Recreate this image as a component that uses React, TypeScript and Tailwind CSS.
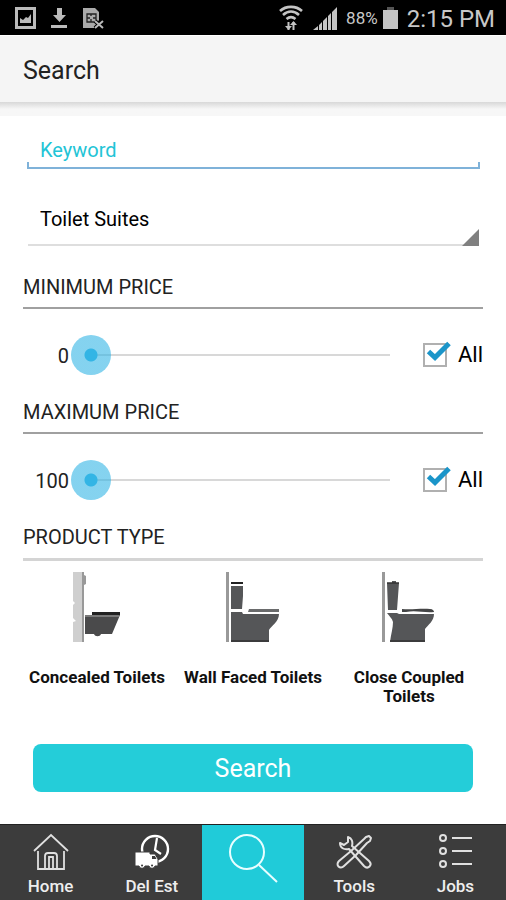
import { useState } from "react"

function StatusBar() {
  return (
    <div className="flex h-9 items-center justify-between border-b border-white bg-black pl-[15px] pr-[11px] text-[#c8c8c8]">
      <div className="flex items-center gap-[15px]">
        <svg width="21" height="22" viewBox="0 0 21 22" fill="none" aria-hidden="true">
          <rect x="1.500" y="1.500" width="18" height="19" stroke="#bbb" strokeWidth="3" />
          <path d="M5 16v-5l3 2 3-3 2 1 3-4v9z" fill="#bbb" />
        </svg>
        <svg width="17" height="22" viewBox="0 0 17 22" fill="#bbb" aria-hidden="true">
          <path d="M6 1h5v7h4l-6.500 7L2 8h4zM0 18h16v3H0z" />
        </svg>
        <svg width="21" height="22" viewBox="0 0 21 22" fill="none" aria-hidden="true">
          <path d="M0 1h12l4 4v8l-5 8H0z" fill="#aaa" />
          <path d="M4 7h9v8H4zM4 11h3M10 11h3M8 7v2M8 15v-3" stroke="#222" strokeWidth="1.300" />
          <path d="M12 14l8 7M20 14l-8 7" stroke="#000" strokeWidth="4" />
          <path d="M12 14l8 7M20 14l-8 7" stroke="#bbb" strokeWidth="2" />
        </svg>
      </div>
      <div className="flex items-center">
        <svg width="24" height="28" viewBox="0 0 24 28" fill="none" stroke="#c4c4c4" aria-hidden="true">
          <path d="M1 7C7 1.500 17 1.500 23 7M4 11C9 6.500 15 6.500 20 11M7.500 15c3-2.500 6-2.500 9 0" strokeWidth="2.600" />
          <path d="M9.500 18v8M14.500 26v-8" strokeWidth="2" />
          <path d="M6 22h7l-3.500 4zM11 21l3.500-4 3.500 4z" fill="#c4c4c4" stroke="none" />
        </svg>
        <svg className="ml-2.5" width="25" height="26" viewBox="0 0 25 26" fill="#c4c4c4" aria-hidden="true">
          <path d="M0 25l5-4v4zM6 20l3-3v8H6zM10 16l4-4v13h-4zM15 11l3-3v17h-3zM19 7l5-5v23h-5z" />
        </svg>
        <span className="ml-2 pt-0.5 text-[17px]">88%</span>
        <svg className="ml-1" width="17" height="24" viewBox="0 0 17 24" aria-hidden="true">
          <path d="M5 1h7v3H5z" fill="#555" />
          <path d="M1 4h15v19H1z" fill="#c4c4c4" />
        </svg>
        <span className="ml-2 pt-0.5 text-2xl">2:15 PM</span>
      </div>
    </div>
  )
}

function PriceFilter({ id, title, initial, min }: any) {
  const [value, setValue] = useState(initial)
  const [all, setAll] = useState(true)

  return (
    <section>
      <h2 className="flex h-[43px] items-center border-b-2 border-[#a0a0a0]">
        <label htmlFor={id}>{title}</label>
      </h2>
      <div className="flex h-[82px] items-center pt-2.5">
        <output htmlFor={id} className="w-[46px] pt-0.5 text-right">
          {value}
        </output>
        <input
          id={id}
          type="range"
          min={min}
          max={5000}
          value={value}
          onChange={(e) => setValue(Number(e.target.value))}
          className="ml-0.5 h-10 min-w-0 flex-1 appearance-none bg-[linear-gradient(#d8d8d8,#d8d8d8)] bg-[length:calc(100%-40px)_2px] bg-center bg-no-repeat [&::-webkit-slider-thumb]:size-10 [&::-webkit-slider-thumb]:appearance-none [&::-webkit-slider-thumb]:rounded-full [&::-webkit-slider-thumb]:bg-[radial-gradient(circle,#33b5e5_6px,#33b5e599_7px)]"
        />
        <label className="ml-[13px] flex items-center gap-[11px] text-[22px] text-black">
          <span className="relative block size-6">
            <input
              type="checkbox"
              checked={all}
              onChange={(e) => setAll(e.target.checked)}
              className="block size-6 appearance-none border-2 border-[#b0b0b0]"
            />
            {all && (
              <svg
                className="pointer-events-none absolute -top-1 left-0"
                width="30"
                height="28"
                viewBox="0 0 30 28"
                fill="none"
                stroke="#1b95c9"
                strokeWidth="5"
                aria-hidden="true"
              >
                <path d="M5.500 12.500l6.500 6L26 4.500" />
              </svg>
            )}
          </span>
          All
        </label>
      </div>
    </section>
  )
}

function ConcealedIcon() {
  return (
    <svg width="48" height="72" viewBox="0 0 48 72" aria-hidden="true">
      <path d="M0 1h10v70H0V51l3-1-3-3V34l2-2-2-2z" fill="#cfcfcf" />
      <path d="M10 1h1v3l2 1v8l-2 1v57H9V1z" fill="#999" />
      <path d="M12 44h35l-8 19H28c-1 3-6 3-7 0h-9z" fill="#4a4a4b" />
      <path d="M19 41h28v3H19z" fill="#222" />
      <path d="M12 45h34" stroke="#aaa" strokeWidth="1" />
    </svg>
  )
}

function WallFacedIcon() {
  return (
    <svg width="54" height="72" viewBox="0 0 54 72" aria-hidden="true">
      <path d="M0 1h3v70H0z" fill="#999" />
      <path d="M5 11h12v2H5z" fill="#222" />
      <path d="M5 15h12v10l-1 13H5zM5 41h11l1 2h36c0 8-8 12-10 16v12H5z" fill="#555658" />
      <path d="M23 38h30v3H22z" fill="#6a6b6c" />
      <path d="M5 70h38" stroke="#333" strokeWidth="1.500" />
    </svg>
  )
}

function CloseCoupledIcon() {
  return (
    <svg width="54" height="72" viewBox="0 0 54 72" aria-hidden="true">
      <path d="M0 1h3v70H0z" fill="#999" />
      <path d="M5 12h5v-2h4v2h3l-2 27H6z" fill="#555658" />
      <path d="M5 42h10l2 1h35c0 7-6 11-9 15v13H8c1-8 3-14 3-20-1-4-4-6-6-9z" fill="#555658" />
      <path d="M20 38c10 1 19-1 28 0 3 0 4 2 4 3-10 1-18-2-28 0h-4z" fill="#444546" />
      <path d="M5 12h12M8 70h35" stroke="#333" strokeWidth="1.500" />
    </svg>
  )
}

const productTypes = [
  { name: "Concealed Toilets", icon: <ConcealedIcon /> },
  { name: "Wall Faced Toilets", icon: <WallFacedIcon /> },
  { name: "Close Coupled Toilets", icon: <CloseCoupledIcon /> },
]

const navItems = [
  {
    name: "Home",
    icon: (
      <svg width="38" height="40" viewBox="0 0 38 40" fill="none" stroke="#e0e0e0" strokeWidth="1.800" aria-hidden="true">
        <path d="M2 19L19 3l17 16M6 19v18h26V19M13 37V24q0-3 3-3h6q3 0 3 3v13M17 37V25h4v12" />
      </svg>
    ),
  },
  {
    name: "Del Est",
    icon: (
      <svg width="36" height="40" viewBox="0 0 36 40" fill="none" stroke="#fff" aria-hidden="true">
        <circle cx="21" cy="17" r="13" strokeWidth="2.400" />
        <path d="M23 6l-2 12 6 4" strokeWidth="2.200" />
        <path d="M1 20h15v2h5l3 5v7h-3c-1 3-5 3-6 0h-4c-1 3-5 3-6 0H1z" fill="#fff" stroke="#3c3c3c" strokeWidth="1" />
        <path d="M18 24h3l1.500 3H18z" fill="#3c3c3c" stroke="none" />
        <path d="M8 33.500h.1M18 33.500h.1" stroke="#3c3c3c" strokeWidth="2" strokeLinecap="round" />
      </svg>
    ),
  },
  {
    name: "Search",
    active: true,
    icon: (
      <svg width="50" height="54" viewBox="0 0 50 54" fill="none" stroke="#e8feff" strokeWidth="2" aria-hidden="true">
        <circle cx="19" cy="22" r="17" />
        <path d="M31 35l18 17" />
      </svg>
    ),
  },
  {
    name: "Tools",
    icon: (
      <svg width="38" height="40" viewBox="0 0 38 40" fill="none" stroke="#e0e0e0" strokeWidth="2" strokeLinejoin="round" aria-hidden="true">
        <path d="M31 5l3-1 2 2-1 3-3 2-11 12L9 34c-4 4-9-1-5-5l12-10L29 7z" />
        <path d="M13 5c4 1 5 5 4 9l17 15c4 4-1 9-5 5L14 17c-5 1-9-1-9-6l4 2 4-3z" />
      </svg>
    ),
  },
  {
    name: "Jobs",
    icon: (
      <svg width="36" height="40" viewBox="0 0 36 40" fill="none" stroke="#e0e0e0" strokeWidth="2" aria-hidden="true">
        <circle cx="6" cy="6" r="3" />
        <circle cx="6" cy="19" r="3" />
        <circle cx="6" cy="32" r="3" />
        <path d="M15 6h20M15 19h20M15 32h20" />
      </svg>
    ),
  },
]

export default function App() {
  const [keyword, setKeyword] = useState("")
  const [tab, setTab] = useState("Search")

  return (
    <div className="flex min-h-screen flex-col bg-white font-['Roboto','Liberation_Sans',sans-serif] text-[#222]">
      <StatusBar />
      <header className="flex h-[66px] items-center bg-[#f5f5f5] px-[23px] pt-1">
        <h1 className="text-[25px]">Search</h1>
      </header>
      <div className="h-3.5 bg-linear-to-b from-[#d8d8d8] to-[#f7f7f7] to-50%" />

      <main className="flex flex-1 flex-col px-[23px]">
        <div className="ml-1 mr-[3px]">
          <input
            type="text"
            aria-label="Keyword"
            placeholder="Keyword"
            value={keyword}
            onChange={(e) => setKeyword(e.target.value)}
            className="block h-[46px] w-full px-[13px] pt-[22px] text-xl outline-none placeholder:text-[#22c4d6]"
          />
          <div className="h-[7px] border-2 border-t-0 border-[#7fb2d9]" />
        </div>

        <div className="relative ml-[5px] mr-1">
          <select
            aria-label="Category"
            className="block h-[77px] w-full appearance-none border-b-2 border-[#dedede] pl-3 pt-6 pb-0 text-xl text-black outline-none"
          >
            <option>Toilet Suites</option>
            <option>Basins</option>
            <option>Tapware</option>
          </select>
          <svg className="pointer-events-none absolute right-0 bottom-0" width="17" height="17" viewBox="0 0 17 17" aria-hidden="true">
            <path d="M17 0v17H0z" fill="#808080" />
          </svg>
        </div>

        <div className="mt-5 text-xl">
          <PriceFilter id="min-price" title="MINIMUM PRICE" initial={0} min={0} />
          <PriceFilter id="max-price" title="MAXIMUM PRICE" initial={100} min={100} />
          <h2 className="flex h-[45px] items-center border-b-[3px] border-[#d4d4d4]">PRODUCT TYPE</h2>
        </div>

        <div className="-mx-1 grid grid-cols-3 pt-2.5">
          {productTypes.map((p) => (
            <button key={p.name} className="flex flex-col items-center text-[17px] leading-[19px] font-bold text-[#111]">
              {p.icon}
              <span className="mt-[25px] max-w-[140px] text-center">{p.name}</span>
            </button>
          ))}
        </div>

        <button className="mx-2.5 mt-[38px] mb-8 h-12 rounded-lg bg-[#24cdd9] pt-0.5 text-[25px] text-white">Search</button>
      </main>

      <nav className="grid h-[76px] grid-cols-5 border-t border-[#222] bg-[#3c3c3c] text-[17px] font-medium text-[#eee]">
        {navItems.map((item) => (
          <button
            key={item.name}
            aria-label={item.name}
            onClick={() => setTab(item.name)}
            className={`flex flex-col items-center ${
              item.active ? "bg-[#20cbd9] pt-[5px]" : "pt-[7px]"
            }`}
            aria-current={tab === item.name}
          >
            {item.icon}
            {!item.active && <span className="leading-7">{item.name}</span>}
          </button>
        ))}
      </nav>
    </div>
  )
}
